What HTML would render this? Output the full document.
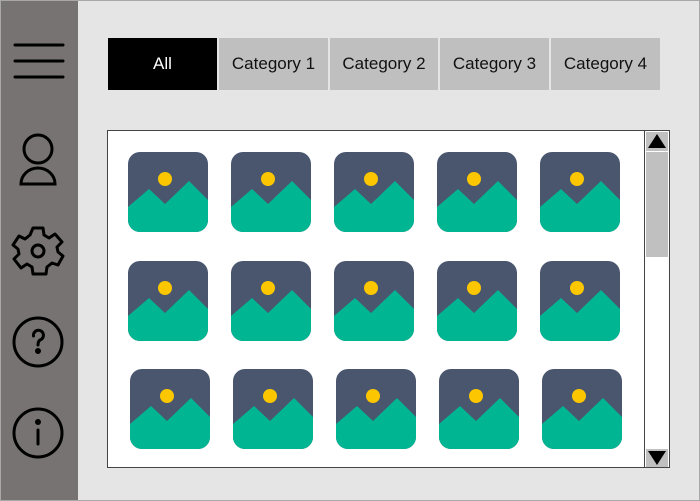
<!DOCTYPE html>
<html><head><style>
*{margin:0;padding:0;box-sizing:border-box}
body{width:700px;height:501px;overflow:hidden;background:#e5e5e5;font-family:"Liberation Sans",sans-serif;position:relative}
.frame{position:absolute;left:0;top:0;width:700px;height:501px;border:1px solid #a8a8a8}
.side{position:absolute;left:1px;top:1px;width:77px;height:499px;background:#767372}
.tab{position:absolute;top:38px;height:52px;background:#bfbfbf;color:#111;font-size:17px;display:flex;align-items:center;justify-content:center}
.list{position:absolute;left:107px;top:130px;width:563px;height:338px;background:#fff;border:1px solid #444}
</style></head><body>
<div class="side"></div>
<svg style="position:absolute;left:0;top:0" width="80" height="501" fill="none" stroke="#000" stroke-width="3" stroke-linecap="round">
<line x1="15" y1="45" x2="63" y2="45"/><line x1="15" y1="61" x2="63" y2="61"/><line x1="15" y1="77" x2="63" y2="77"/>
<circle cx="38" cy="149" r="14"/>
<path d="M21 184 A17 16 0 0 1 55 184 Z"/>
<g transform="translate(38,251)">
<path d="M-5,-23 L5,-23 L6,-16 L11,-13 L17,-17 L24,-9 L19,-4 L20,1 L25,5 L20,14 L14,12 L9,16 L8,23 L-5,23 L-6,16 L-11,13 L-17,17 L-24,8 L-19,3 L-20,-2 L-25,-6 L-19,-15 L-13,-12 L-8,-16 Z" stroke-linejoin="round"/>
<circle r="6"/></g>
<circle cx="38" cy="342" r="24"/>
<path d="M33.5 336 A5 5 0 1 1 40 340 Q38 341.5 38 345"/><circle cx="38" cy="351" r="1.5" fill="#000"/>
<circle cx="38" cy="433" r="24"/>
<line x1="38" y1="430" x2="38" y2="444"/><circle cx="38" cy="422" r="1.5" fill="#000"/>
</svg>
<div class="tab" style="left:108px;width:109px;background:#000;color:#fff">All</div>
<div class="tab" style="left:219px;width:109px">Category 1</div>
<div class="tab" style="left:330px;width:108px">Category 2</div>
<div class="tab" style="left:440px;width:109px">Category 3</div>
<div class="tab" style="left:551px;width:109px">Category 4</div>
<div class="list"></div>
<svg style="position:absolute;left:0;top:0" width="700" height="501">
<defs><g id="im"><clipPath id="c"><rect width="80" height="80" rx="12"/></clipPath>
<g clip-path="url(#c)"><rect width="80" height="80" fill="#4a566e"/>
<path d="M0 55 L21 37 L37 52 L61 29 L80 48 L80 80 L0 80Z" fill="#00b592"/>
<circle cx="37" cy="27" r="7" fill="#fcc600"/></g></g></defs>
<use href="#im" x="128" y="152"/><use href="#im" x="231" y="152"/><use href="#im" x="334" y="152"/><use href="#im" x="437" y="152"/><use href="#im" x="540" y="152"/>
<use href="#im" x="128" y="261"/><use href="#im" x="231" y="261"/><use href="#im" x="334" y="261"/><use href="#im" x="437" y="261"/><use href="#im" x="540" y="261"/>
<use href="#im" x="130" y="369"/><use href="#im" x="233" y="369"/><use href="#im" x="336" y="369"/><use href="#im" x="439" y="369"/><use href="#im" x="542" y="369"/>
<line x1="644.5" y1="131" x2="644.5" y2="467" stroke="#444"/>
<rect x="646" y="132" width="22" height="19" fill="#c0c0c0"/>
<path d="M648 148 L657 134 L666 148Z" fill="#000"/>
<rect x="646" y="152" width="22" height="105" fill="#c0c0c0"/>
<rect x="646" y="449" width="22" height="18" fill="#c0c0c0"/>
<path d="M648 451 L666 451 L657 465Z" fill="#000"/>
</svg>
<div class="frame"></div>
</body></html>
